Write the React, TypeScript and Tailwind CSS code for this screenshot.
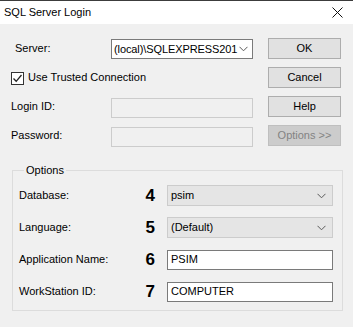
import React from 'react';

function Chevron() {
  return (
    <svg width="9" height="6" viewBox="0 0 9 6" className="shrink-0">
      <path d="M0.5 0.8 L4.5 4.8 L8.5 0.8" fill="none" stroke="#5a5a5a" strokeWidth="1" />
    </svg>
  );
}

function Button({ label, disabled }: { label: string; disabled?: boolean }) {
  return (
    <div
      className={
        disabled
          ? 'h-[21px] w-[73px] border border-[#bfbfbf] bg-[#cccccc] text-[#838383] flex items-center justify-center'
          : 'h-[21px] w-[73px] border border-[#adadad] bg-[#e1e1e1] text-black flex items-center justify-center'
      }
    >
      {label}
    </div>
  );
}

export default function App() {
  const options = [
    { label: 'Database:', num: '4', value: 'psim', combo: true },
    { label: 'Language:', num: '5', value: '(Default)', combo: true },
    { label: 'Application Name:', num: '6', value: 'PSIM', combo: false },
    { label: 'WorkStation ID:', num: '7', value: 'COMPUTER', combo: false },
  ];

  return (
    <div
      className="w-[353px] h-[327px] bg-[#f0f0f0] text-[11px] text-black overflow-hidden"
      style={{ fontFamily: '"Liberation Sans", Arial, sans-serif' }}
    >
      {/* Title bar */}
      <div className="h-[24px] bg-white border-t border-[#3c3c3c] flex items-center justify-between pl-[4px] pr-[10px]">
        <span className="text-[11px] pb-[1px]">SQL Server Login</span>
        <svg width="11" height="11" viewBox="0 0 11 11">
          <path d="M0.5 0.5 L10.5 10.5 M10.5 0.5 L0.5 10.5" stroke="#111" strokeWidth="1" />
        </svg>
      </div>

      {/* Top section */}
      <div className="flex pt-[14px]">
        <div className="w-[253px] flex flex-col gap-[8px]">
          <div className="h-[21px] flex items-center">
            <span className="pl-[15px] flex-1">Server:</span>
            <div className="h-[20px] mt-[1px] w-[142px] bg-white border border-[#7a7a7a] flex items-center justify-between pl-[2px] pr-[4px]">
              <span className="tracking-[-0.1px]">(local)\SQLEXPRESS201</span>
              <Chevron />
            </div>
          </div>
          <div className="h-[21px] flex items-center pl-[11px] gap-[4px]">
            <div className="w-[13px] h-[13px] bg-white border border-[#333333] flex items-center justify-center mt-[1px]">
              <svg width="11" height="11" viewBox="0 0 11 11">
                <path d="M1.5 5.5 L4.2 8.3 L9.5 2" fill="none" stroke="#222" strokeWidth="1.3" />
              </svg>
            </div>
            <span>Use Trusted Connection</span>
          </div>
          <div className="h-[21px] flex items-center">
            <span className="pl-[11px] flex-1">Login ID:</span>
            <div className="h-[20px] mt-[2px] w-[142px] bg-[#f0f0f0] border border-[#cccccc]" />
          </div>
          <div className="h-[21px] flex items-center">
            <span className="pl-[11px] flex-1">Password:</span>
            <div className="h-[20px] mt-[2px] w-[142px] bg-[#f0f0f0] border border-[#cccccc]" />
          </div>
        </div>
        <div className="ml-[15px] flex flex-col gap-[8px]">
          <Button label="OK" />
          <Button label="Cancel" />
          <Button label="Help" />
          <Button label="Options >>" disabled />
        </div>
      </div>

      {/* Options group */}
      <fieldset className="ml-[12px] mt-[18px] w-[331px] h-[147px] border border-[#dcdcdc] pl-[6px] pr-[9px] pt-[8px]">
        <legend className="ml-[5px] px-[2px] leading-[13px]">Options</legend>
        <div className="flex flex-col gap-[11px]">
          {options.map((o) => (
            <div key={o.label} className="h-[21px] flex items-center">
              <span className="flex-1">{o.label}</span>
              <span className="text-[17px] font-bold mr-[12px] leading-none">{o.num}</span>
              {o.combo ? (
                <div className="h-[21px] w-[166px] bg-[#e5e5e5] border border-[#cccccc] flex items-center justify-between pl-[3px] pr-[6px]">
                  <span>{o.value}</span>
                  <Chevron />
                </div>
              ) : (
                <div className="h-[20px] w-[166px] bg-white border border-[#7a7a7a] flex items-center pl-[3px]">
                  <span>{o.value}</span>
                </div>
              )}
            </div>
          ))}
        </div>
      </fieldset>
    </div>
  );
}
